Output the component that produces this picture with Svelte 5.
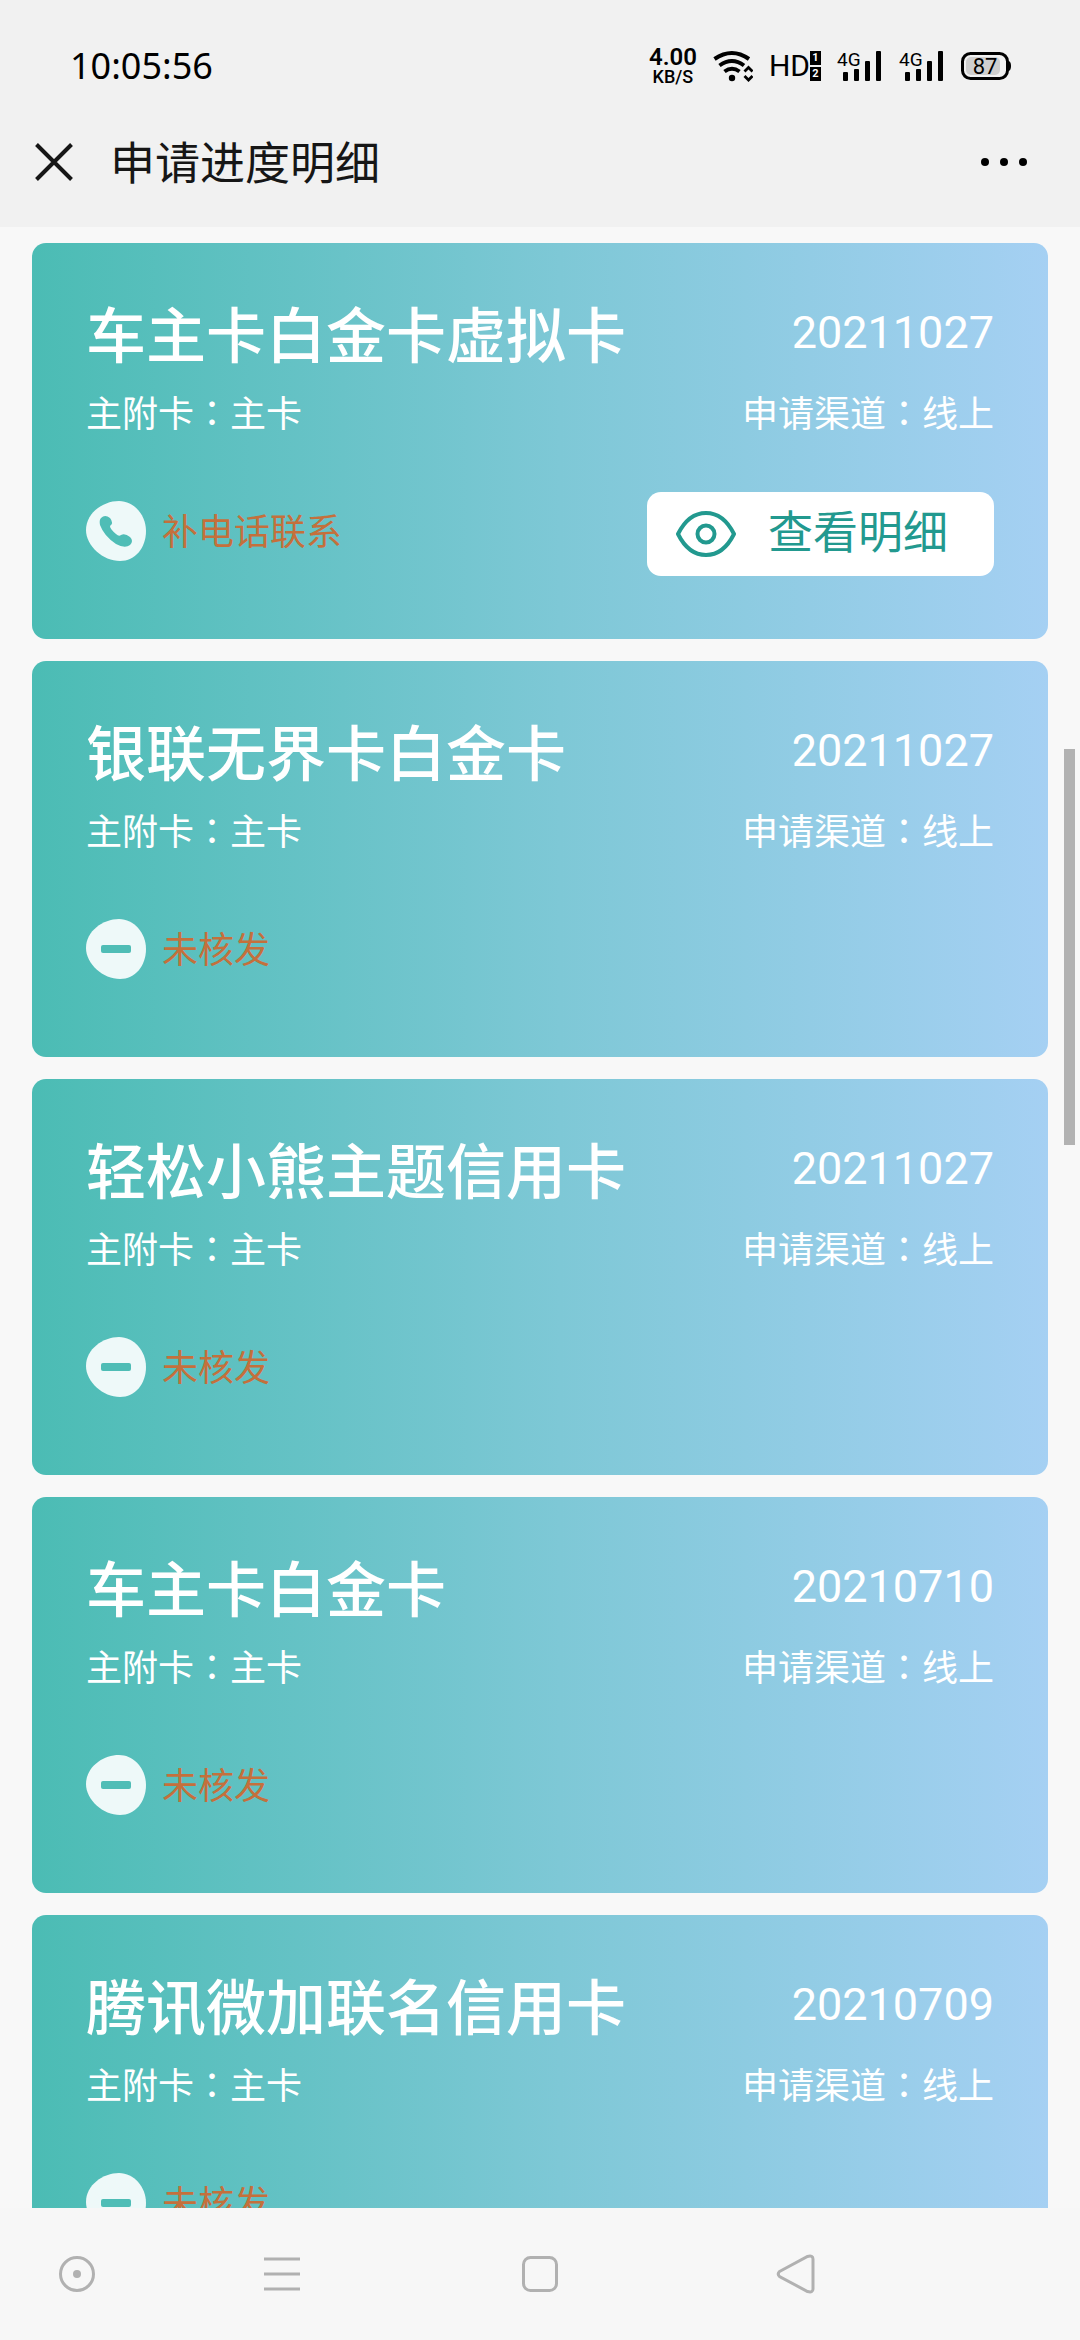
<script>
  const cards = [
    { name: '车主卡白金卡虚拟卡', date: '20211027', status: '补电话联系', icon: 'phone', detail: true },
    { name: '银联无界卡白金卡', date: '20211027', status: '未核发', icon: 'minus', detail: false },
    { name: '轻松小熊主题信用卡', date: '20211027', status: '未核发', icon: 'minus', detail: false },
    { name: '车主卡白金卡', date: '20210710', status: '未核发', icon: 'minus', detail: false },
    { name: '腾讯微加联名信用卡', date: '20210709', status: '未核发', icon: 'minus', detail: false }
  ];
</script>

{#snippet signal()}
  <svg class="signal" viewBox="0 0 46 32" aria-hidden="true">
    <text x="0" y="16">4G</text>
    <g fill="#000">
      <rect x="6" y="22" width="5" height="9" rx="1" />
      <rect x="17" y="19" width="5" height="12" rx="1" />
      <rect x="28" y="11" width="5" height="20" rx="1" />
      <rect x="39" y="1" width="5" height="30" rx="1" />
    </g>
  </svg>
{/snippet}

<div class="screen">
  <header>
    <div class="statusbar">
      <span class="time">10:05:56</span>
      <div class="indicators">
        <div class="speed"><b>4.00</b><span>KB/S</span></div>
        <svg class="wifi" viewBox="0 0 40 32" aria-hidden="true">
          <g fill="none" stroke="#000" stroke-width="4">
            <path d="M1.5 9 Q19 -3 36 9" />
            <path d="M6.500 15.500 Q19 6.500 31 15.500" />
            <path d="M11.500 21.500 Q19 16 26.500 21.500" />
          </g>
          <circle cx="19" cy="28" r="3.200" />
          <path d="M31.500 21.500l4-4 4 4M31.500 26l4 4 4-4" fill="none" stroke="#000" stroke-width="2.800" />
        </svg>
        <div class="hd">
          <span>HD</span>
          <div class="sims"><i>1</i><i>2</i></div>
        </div>
        {@render signal()}
        {@render signal()}
        <svg class="battery" viewBox="0 0 50 28" aria-hidden="true">
          <rect x="5" y="5" width="34" height="18" rx="5" fill="#cfcfcf" />
          <rect x="1.500" y="1.500" width="45" height="25" rx="8" fill="none" stroke="#000" stroke-width="3" />
          <path d="M47 9q3 0 3 5t-3 5z" />
          <text x="24" y="22" text-anchor="middle">87</text>
        </svg>
      </div>
    </div>
    <div class="titlebar">
      <button class="plain" aria-label="关闭">
        <svg class="close" viewBox="0 0 38 38"><path d="M1.500 1.500l35 35M36.500 1.500l-35 35" stroke="#161616" stroke-width="4" /></svg>
      </button>
      <h1>申请进度明细</h1>
      <button class="plain" aria-label="更多">
        <svg class="more" viewBox="0 0 48 10"><circle cx="5" cy="5" r="4" /><circle cx="24" cy="5" r="4" /><circle cx="43" cy="5" r="4" /></svg>
      </button>
    </div>
  </header>

  <main>
    {#each cards as card}
      <article>
        <div class="row top">
          <h2>{card.name}</h2>
          <time>{card.date}</time>
        </div>
        <div class="row meta">
          <span>主附卡<span class="colon">：</span>主卡</span>
          <span>申请渠道<span class="colon">：</span>线上</span>
        </div>
        <div class="row foot">
          <div class="status">
            <svg class="badge" viewBox="0 0 60 60" aria-hidden="true">
              <path d="M33 0C48 0 60 14 60 30C60 47 49 60 34 60C17 60 0 45 0 29C0 12 17 0 33 0Z" fill="#eef9f9" />
              {#if card.icon === 'phone'}
                <path d="M15 17q4-4 9 0q4 5 0 8q0 3 6 8q3 3 5 1q4-2 9 2q4 4 0 8q-5 4-14-1q-12-8-16-19q-1-5 1-7z" fill="#4fbdb6" />
              {:else}
                <rect x="15" y="26" width="30" height="8" rx="2" fill="#4fbdb6" />
              {/if}
            </svg>
            <span>{card.status}</span>
          </div>
          {#if card.detail}
            <button class="detail">
              <svg class="eye" viewBox="0 0 60 46" aria-hidden="true">
                <g fill="none" stroke="#22998f" stroke-width="4">
                  <path d="M2 23C9 9 19 2 30 2S51 9 58 23C51 37 41 44 30 44S9 37 2 23Z" stroke-linejoin="round" />
                  <circle cx="30" cy="23" r="8.500" />
                </g>
              </svg>
              <span>查看明细</span>
            </button>
          {/if}
        </div>
      </article>
    {/each}
    <div class="scrollbar"></div>
  </main>

  <nav>
    <button class="plain" aria-label="助手">
      <svg viewBox="0 0 40 40"><circle cx="20" cy="20" r="16.500" /><circle class="dot" cx="20" cy="20" r="4" /></svg>
    </button>
    <button class="plain" aria-label="菜单">
      <svg viewBox="0 0 40 40"><path d="M2 5h36M2 20h36M2 35h36" /></svg>
    </button>
    <button class="plain" aria-label="主页">
      <svg viewBox="0 0 40 40"><rect x="3.500" y="3.500" width="33" height="33" rx="7" /></svg>
    </button>
    <button class="plain" aria-label="返回">
      <svg viewBox="0 0 40 40"><path d="M3.500 17.500L31.500 2.500Q37 1 37 5V35Q37 39 31.500 37.500L3.500 22.500Q1 20 3.500 17.500Z" /></svg>
    </button>
  </nav>
</div>

<style>
  :global(body) {
    margin: 0;
    background: #f8f8f8;
  }

  .screen {
    display: flex;
    flex-direction: column;
    height: 100vh;
    overflow: hidden;
    font-family: Roboto, 'Noto Sans CJK SC', sans-serif;
    background: #f8f8f8;
  }

  header {
    flex: none;
    background: #f1f1f1;
    color: #000;
  }

  .plain {
    display: flex;
    align-items: center;
    justify-content: center;
    padding: 0;
    border: 0;
    background: none;
  }

  .statusbar {
    display: flex;
    align-items: center;
    justify-content: space-between;
    height: 84px;
    padding: 24px 69px 0 70px;
  }

  .time {
    font-family: 'Noto Sans', sans-serif;
    font-size: 36px;
    line-height: 48px;
  }

  .indicators {
    display: flex;
    align-items: center;
    gap: 16px;
  }

  .speed {
    display: flex;
    flex-direction: column;
    align-items: center;
    font-size: 18px;
    font-weight: 500;
    line-height: 18px;
  }

  .speed b {
    font-size: 24px;
    font-weight: 600;
    line-height: 22px;
  }

  .wifi {
    width: 40px;
    height: 32px;
  }

  .hd {
    display: flex;
    align-items: center;
    font-size: 30px;
    line-height: 32px;
  }

  .sims {
    display: flex;
    flex-direction: column;
    gap: 2px;
  }

  .sims i {
    width: 11px;
    background: #000;
    color: #fff;
    font-size: 11px;
    font-style: normal;
    font-weight: 700;
    line-height: 14px;
    text-align: center;
  }

  .signal {
    width: 46px;
    height: 32px;
    overflow: visible;
    font-size: 19px;
  }

  .battery {
    width: 50px;
    height: 28px;
    font-size: 22px;
  }

  .titlebar {
    display: flex;
    align-items: center;
    height: 108px;
    padding: 0 52px 11px 35px;
  }

  .close {
    width: 38px;
    height: 38px;
  }

  h1 {
    flex: 1;
    margin: 0 0 0 37px;
    padding-top: 6px;
    color: #161616;
    font-size: 45px;
    font-weight: 400;
    line-height: 60px;
  }

  .more {
    width: 48px;
    height: 10px;
  }

  main {
    position: relative;
    display: flex;
    flex: 1;
    flex-direction: column;
    gap: 22px;
    min-height: 0;
    padding: 16px 32px 0;
    overflow: hidden;
  }

  article {
    flex: none;
    padding: 59px 54px 63px;
    border-radius: 14px;
    background: linear-gradient(90deg, #4bbcb4, #7ec8d6 52%, #a5d0f3);
    color: #fff;
  }

  .row {
    display: flex;
    justify-content: space-between;
  }

  h2 {
    margin: 0;
    font-size: 60px;
    font-weight: 500;
    line-height: 72px;
  }

  time {
    font-size: 45px;
    line-height: 62px;
  }

  .meta {
    margin: 17px 0 53px;
    font-size: 36px;
    line-height: 48px;
  }

  /* The traditional face sets the colon in the middle of its square. */
  .colon {
    font-family: 'Noto Sans CJK TC', sans-serif;
    line-height: 1;
  }

  .foot {
    height: 84px;
  }

  .status {
    display: flex;
    align-items: center;
    gap: 16px;
    height: 78px;
    color: #c4703c;
    font-size: 36px;
    line-height: 48px;
  }

  .status span {
    padding-top: 4px;
  }

  .badge {
    width: 60px;
    height: 60px;
  }

  .detail {
    display: flex;
    align-items: center;
    gap: 32px;
    padding: 0 46px 0 29px;
    border: 0;
    border-radius: 14px;
    background: #fff;
    color: #22998f;
    font-family: inherit;
    font-size: 45px;
    line-height: 60px;
  }

  .eye {
    width: 60px;
    height: 46px;
  }

  .scrollbar {
    position: absolute;
    top: 522px;
    right: 5px;
    width: 11px;
    height: 396px;
    background: #b2b2b2;
  }

  nav {
    display: grid;
    flex: none;
    grid-template-columns: 154fr 256fr 260fr 252fr 158fr;
    height: 132px;
    background: #f7f7f7;
  }

  nav svg {
    width: 40px;
    height: 40px;
    fill: none;
    stroke: #b1b1b1;
    stroke-width: 3;
  }

  nav .dot {
    fill: #b1b1b1;
    stroke: none;
  }
</style>
